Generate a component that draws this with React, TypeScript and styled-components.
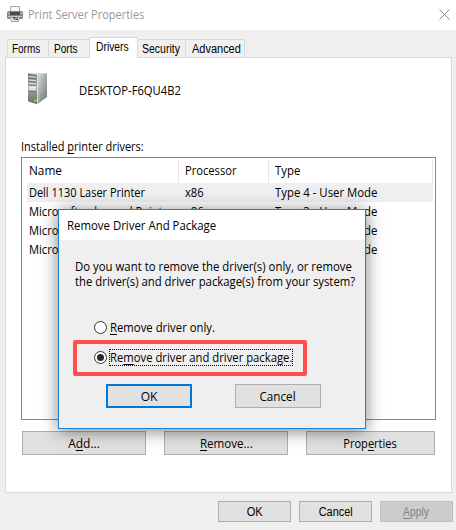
import React from 'react';
import styled, { createGlobalStyle, css } from 'styled-components';

const Global = createGlobalStyle`
  *, *::before, *::after { box-sizing: border-box; }
  body { margin: 0; background: #efefef; }
`;

const Window = styled.main`
  position: relative;
  width: 456px;
  height: 530px;
  overflow: hidden;
  background: #efefef;
  color: #000;
  font: 12px/15px "Open Sans", "Noto Sans", sans-serif;
  white-space: nowrap;
`;

const Label = styled.span<{ $fit?: number; $center?: boolean }>`
  display: inline-block;
  transform: scaleX(${(p) => p.$fit ?? 1});
  transform-origin: ${(p) => (p.$center ? 'center' : 'left')} center;
`;

const Key = styled.span`
  text-decoration: underline;
  text-decoration-thickness: 1px;
  text-underline-offset: 2px;
  text-decoration-skip-ink: none;
`;

const TitleBar = styled.header`
  display: flex;
  height: 30px;
  padding: 0 6px 0 7px;
  background: #fff;
  color: #999;
`;

const TitleIcon = styled.svg`
  width: 16px;
  height: 16px;
  margin: 6px 5px 0 0;
`;

const TitleText = styled.h1`
  flex: 1;
  margin: 7px 0 0;
  font: inherit;
`;

const CloseIcon = styled.svg`
  width: 11px;
  height: 11px;
  margin-top: 9px;
`;

const Tabs = styled.nav`
  display: flex;
  align-items: flex-end;
  height: 27px;
  padding-left: 7px;
`;

const Tab = styled.div<{ $width: number; $inset: number; $active?: boolean }>`
  width: ${(p) => p.$width}px;
  height: 18px;
  padding: 2px 0 0 ${(p) => p.$inset}px;
  border: solid #d9d9d9;
  border-width: 1px 1px 0 0;
  background: #f0f0f0;
  font-family: "Liberation Sans", Arial, sans-serif;
  &:first-child { border-left-width: 1px; }
  ${(p) => p.$active && css`
    z-index: 1;
    height: 21px;
    margin: 0 0 -1px -1px;
    border-left-width: 1px;
    background: #fff;
  `}
`;

const Pane = styled.section`
  display: flex;
  flex-direction: column;
  width: 447px;
  height: 436px;
  margin-left: 5px;
  padding: 14px 15px 0;
  border: 1px solid #d9d9d9;
  background: #fff;
`;

const Host = styled.div`
  display: flex;
  height: 67px;
`;

const ServerIcon = styled.svg`
  width: 32px;
  height: 34px;
  margin: 0 26px 0 0;
`;

const HostName = styled.div`
  padding-top: 11px;
`;

const ListTitle = styled.div`
  height: 18px;
`;

const List = styled.div`
  width: 415px;
  height: 263px;
  padding: 1px 2px 0 5px;
  border: 1px solid #828790;
`;

const listColumns = css`
  display: grid;
  grid-template-columns: 152px 90px 164px;
`;

const ListHead = styled.div`
  ${listColumns}
  height: 24px;
`;

const HeadCell = styled.div`
  padding: 4px 0 0 6px;
  border-right: 1px solid #e5e5e5;
  &:first-child { padding-left: 2px; }
`;

const Row = styled.div<{ $selected?: boolean }>`
  ${listColumns}
  width: 406px;
  height: 19px;
  background: ${(p) => (p.$selected ? '#efefef' : 'transparent')};
`;

const Cell = styled.div`
  padding: 2px 0 0 6px;
  &:first-child { padding-left: 2px; }
`;

const Actions = styled.div`
  display: flex;
  gap: 18px;
  margin: 11px 0 0 1px;
`;

const Footer = styled.footer`
  display: flex;
  justify-content: flex-end;
  gap: 8px;
  padding: 8px 3px 0 0;
  font-family: "Liberation Sans", Arial, sans-serif;
`;

const Button = styled.button<{ $width: number; $primary?: boolean }>`
  display: flex;
  align-items: center;
  justify-content: center;
  width: ${(p) => p.$width}px;
  height: 24px;
  padding: 0;
  border: ${(p) => (p.$primary ? '2px solid #0078d7' : '1px solid #adadad')};
  background: #e1e1e1;
  color: #000;
  font: inherit;
  &:disabled {
    border-color: #bfbfbf;
    background: #ccc;
    color: #838383;
  }
`;

const FooterButton = styled(Button)`
  height: 21px;
  padding-top: 2px;
`;

const Dialog = styled.div`
  position: absolute;
  left: 58px;
  top: 209px;
  width: 308px;
  height: 220px;
  border: 1px solid #1883d7;
  background: #efefef;
  box-shadow: 0 2px 16px rgba(0, 0, 0, 0.5);
`;

const DialogTitle = styled.h2`
  height: 30px;
  margin: 0;
  padding: 8px 0 0 8px;
  background: #fff;
  font: inherit;
`;

const Message = styled.div`
  display: flex;
  flex-direction: column;
  height: 79px;
  padding: 19px 0 0 16px;
`;

const Option = styled.label`
  display: flex;
  align-items: center;
  height: 17px;
  margin: 0 0 13px 35px;
`;

const RadioIcon = styled.svg`
  width: 13px;
  height: 13px;
  margin-right: 2px;
`;

const OptionText = styled.span<{ $width: number; $focused?: boolean }>`
  width: ${(p) => p.$width}px;
  height: 17px;
  border: 1px dotted ${(p) => (p.$focused ? '#000' : 'transparent')};
  line-height: 16px;
`;

const Highlight = styled.div`
  position: absolute;
  left: 14px;
  top: 130px;
  width: 234px;
  height: 36px;
  border: 4px solid #ff5050;
  border-radius: 2px;
`;

const DialogButtons = styled.div`
  display: flex;
  gap: 43px;
  padding: 5px 0 0 47px;
`;

const Radio = ({ checked }: { checked?: boolean }) => (
  <RadioIcon viewBox="0 0 13 13">
    <circle cx="6.5" cy="6.5" r="6" fill="#fff" stroke="#333" />
    {checked && <circle cx="6.5" cy="6.5" r="3.5" fill="#2b2b2b" />}
  </RadioIcon>
);

const Printer = () => (
  <TitleIcon viewBox="0 0 16 16">
    <path d="M3.5 6V.5h9V6" fill="#fafafa" stroke="#a5a5a5" />
    <rect x="0" y="5" width="16" height="8" rx="1.5" fill="#858585" />
    <path d="M1 6h14v3H1z" fill="#a0a0a0" />
    <path d="M3 6h10v3H3z" fill="#4b4b4b" />
    <path d="M1 10h14v1H1z" fill="#c4c4c4" />
    <path d="M3.5 11.5h9l-1 4h-7z" fill="#eef2f4" stroke="#999" />
    <path d="M6 11h5v3H6z" fill="#5c9db8" />
    <path d="M6 11h2v1H6zM9 13h2v1H9z" fill="#2f5369" />
  </TitleIcon>
);

const Server = () => (
  <ServerIcon viewBox="0 0 32 34">
    <defs>
      <linearGradient id="front" x1="0" y1="0" x2="0" y2="1">
        <stop offset="0" stopColor="#6f7878" />
        <stop offset=".45" stopColor="#aeb6b6" />
        <stop offset=".65" stopColor="#8b9292" />
        <stop offset="1" stopColor="#666d6c" />
      </linearGradient>
      <linearGradient id="side" x1="0" y1="0" x2="1" y2="1">
        <stop offset="0" stopColor="#d9dddd" />
        <stop offset=".5" stopColor="#a3a9a9" />
        <stop offset="1" stopColor="#6f7575" />
      </linearGradient>
    </defs>
    <path d="M7 1h18.5v1.5L17 3.5 7 2z" fill="#d3d8d7" />
    <path d="M7 1.500 16.500 3v29.200L7 29.500z" fill="url(#front)" />
    <path d="m16.500 3 9.500-1.500v23.500L16.500 32.200z" fill="url(#side)" />
    <path d="m8 4.500 7 .8M8 8l7 .6M8 11.500l7 .4" stroke="#e3e7e7" strokeWidth="1" />
    <path d="m8 15 7 .2M8 17l7 .2" stroke="#f4f7f8" strokeWidth="1.400" />
    <path d="m8 6 7 .8M8 9.600l7 .6M8 13l7 .4M8 19.500l7 .5" stroke="#59625f" strokeWidth=".6" />
    <path d="M16.500 3v29" stroke="#e4e8e8" strokeWidth=".7" />
    <path d="m19 24 4-2.500m-4 4.500 4-2.500m-4 4.500 4-2.500" stroke="#777e7e" strokeWidth=".8" strokeDasharray="1 1" />
    <path d="m13 27 2.500.6v2.600L13 29.500z" fill="#78e000" />
  </ServerIcon>
);

const tabs = [
  { name: 'Forms', width: 42, fit: 0.83, inset: 4 },
  { name: 'Ports', width: 41, fit: 0.84, inset: 5 },
  { name: 'Drivers', width: 49, fit: 0.86, inset: 6, active: true },
  { name: 'Security', width: 48, fit: 0.875, inset: 4 },
  { name: 'Advanced', width: 59, fit: 0.915, inset: 6 },
];

const drivers = [
  { name: 'Dell 1130 Laser Printer', fit: 0.913, type: 'Type 4 - User Mode' },
  { name: 'Microsoft enhanced Point a...', fit: 0.93, type: 'Type 3 - User Mode' },
  { name: 'Microsoft Print To PDF', fit: 0.93, type: 'Type 4 - User Mode' },
  { name: 'Microsoft XPS Document...', fit: 0.93, type: 'Type 4 - User Mode' },
];

export default function App() {
  return (
    <Window>
      <Global />
      <TitleBar>
        <Printer />
        <TitleText><Label $fit={0.916}>Print Server Properties</Label></TitleText>
        <CloseIcon viewBox="0 0 11 11">
          <path d="m.5.5 10 10m0-10-10 10" stroke="#888" fill="none" />
        </CloseIcon>
      </TitleBar>
      <Tabs>
        {tabs.map((t) => (
          <Tab key={t.name} $width={t.width} $inset={t.inset} $active={t.active}>
            <Label $fit={t.fit}>{t.name}</Label>
          </Tab>
        ))}
      </Tabs>
      <Pane>
        <Host>
          <Server />
          <HostName><Label $fit={0.935}>DESKTOP-F6QU4B2</Label></HostName>
        </Host>
        <ListTitle><Label $fit={0.915}>Installed <Key>p</Key>rinter drivers:</Label></ListTitle>
        <List>
          <ListHead>
            <HeadCell><Label $fit={0.98}>Name</Label></HeadCell>
            <HeadCell><Label $fit={0.93}>Processor</Label></HeadCell>
            <HeadCell><Label $fit={0.95}>Type</Label></HeadCell>
          </ListHead>
          {drivers.map((d, i) => (
            <Row key={d.name} $selected={i === 0}>
              <Cell><Label $fit={d.fit}>{d.name}</Label></Cell>
              <Cell><Label $fit={0.93}>x86</Label></Cell>
              <Cell><Label $fit={0.948}>{d.type}</Label></Cell>
            </Row>
          ))}
        </List>
        <Actions>
          <Button $width={124}><Label $center>A<Key>d</Key>d...</Label></Button>
          <Button $width={124}><Label $center $fit={0.965}><Key>R</Key>emove...</Label></Button>
          <Button $width={129}><Label $center $fit={0.92}>Prop<Key>e</Key>rties</Label></Button>
        </Actions>
      </Pane>
      <Footer>
        <FooterButton $width={73}><Label $center $fit={0.92}>OK</Label></FooterButton>
        <FooterButton $width={73}><Label $center $fit={0.91}>Cancel</Label></FooterButton>
        <FooterButton $width={73} disabled><Label $center $fit={0.86}><Key>A</Key>pply</Label></FooterButton>
      </Footer>
      <Dialog role="dialog">
        <DialogTitle><Label $fit={0.95}>Remove Driver And Package</Label></DialogTitle>
        <Message>
          <Label $fit={0.948}>Do you want to remove the driver(s) only, or remove</Label>
          <Label $fit={0.945}>the driver(s) and driver package(s) from your system?</Label>
        </Message>
        <Option>
          <Radio />
          <OptionText $width={110}><Label $fit={0.945}><Key>R</Key>emove driver only.</Label></OptionText>
        </Option>
        <Option>
          <Radio checked />
          <OptionText $width={184} $focused><Label $fit={0.94}>Re<Key>m</Key>ove driver and driver package.</Label></OptionText>
        </Option>
        <Highlight />
        <DialogButtons>
          <Button $width={86} $primary><Label $center>OK</Label></Button>
          <Button $width={86}><Label $center $fit={0.975}>Cancel</Label></Button>
        </DialogButtons>
      </Dialog>
    </Window>
  );
}
